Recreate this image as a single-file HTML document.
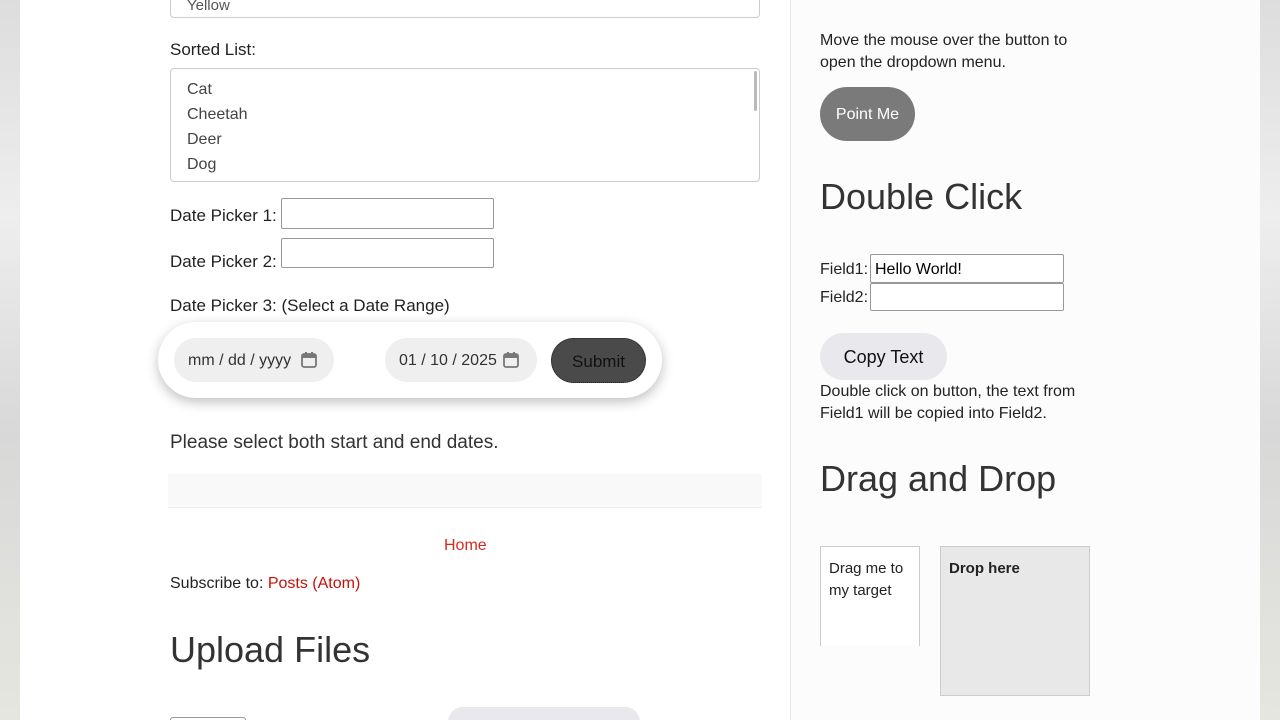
<!DOCTYPE html>
<html style="width:1280px;height:720px;overflow:hidden"><head><meta charset="utf-8"><style>
*{box-sizing:border-box}
body{margin:0;width:1280px;height:720px;overflow:hidden;font-family:"Liberation Sans",sans-serif;color:#222;background:linear-gradient(180deg,#ddd 0%,#eee 30%,#d8d8d8 60%,#e6e6e0 100%);position:relative}
.page{position:absolute;left:20px;top:0;width:1240px;height:720px;background:#fff}
.side{position:absolute;left:790px;top:0;width:470px;height:720px;background:#fcfcfc;border-left:1px solid #e8e8e8}
.a{position:absolute}
.t{font-size:16px;color:#222}
.in{position:absolute;border:1px solid #999;border-radius:2px;background:#fff}
h2{position:absolute;margin:0;font-weight:normal;font-size:36px;color:#333}
.pill{position:absolute;border-radius:22px;background:#efefef;height:44px;font-size:16px;color:#333;line-height:46px;padding-left:14px}
.clip{position:absolute;left:0;top:0;width:1280px;height:720px;overflow:hidden}
</style></head><body><div class="clip">
<div class="page"></div>
<div class="side"></div>
<div class="a" style="left:170px;top:-10px;width:590px;height:28px;border:1px solid #ccc;border-radius:4px;background:#fff"><span style="position:absolute;left:16px;top:6px;color:#555;font-size:15px">Yellow</span></div>
<div class="a t" style="left:170px;top:40px;font-size:17px">Sorted List:</div>
<div class="a" style="left:170px;top:68px;width:590px;height:114px;border:1px solid #ccc;border-radius:4px;background:#fff;font-size:16px;color:#444;line-height:25px;padding:8px 16px">Cat<br>Cheetah<br>Deer<br>Dog
<div style="position:absolute;right:2px;top:2px;width:3px;height:40px;background:#bbb;border-radius:2px"></div></div>
<div class="a t" style="left:170px;top:206px;font-size:17px">Date Picker 1:</div>
<div class="in" style="left:281px;top:198px;width:213px;height:31px"></div>
<div class="a t" style="left:170px;top:252px;font-size:17px">Date Picker 2:</div>
<div class="in" style="left:281px;top:238px;width:213px;height:30px"></div>
<div class="a t" style="left:170px;top:296px;font-size:17px">Date Picker 3: (Select a Date Range)</div>
<div class="a" style="left:158px;top:322px;width:504px;height:76px;border-radius:38px;background:#fff;box-shadow:0 4px 12px rgba(0,0,0,.25)"></div>
<div class="pill" style="left:174px;top:338px;width:160px">mm / dd / yyyy</div>
<div class="pill" style="left:385px;top:338px;width:152px">01 / 10 / 2025</div>
<svg class="a" style="left:300px;top:351px" width="18" height="18" viewBox="0 0 18 18"><rect x="2" y="3" width="14" height="13" rx="2" fill="none" stroke="#777" stroke-width="1.8"/><rect x="2" y="3" width="14" height="4" fill="#777"/><rect x="5" y="1" width="2" height="3" fill="#777"/><rect x="11" y="1" width="2" height="3" fill="#777"/></svg>
<svg class="a" style="left:502px;top:351px" width="18" height="18" viewBox="0 0 18 18"><rect x="2" y="3" width="14" height="13" rx="2" fill="none" stroke="#777" stroke-width="1.8"/><rect x="2" y="3" width="14" height="4" fill="#777"/><rect x="5" y="1" width="2" height="3" fill="#777"/><rect x="11" y="1" width="2" height="3" fill="#777"/></svg>
<div class="a" style="left:551px;top:338px;width:95px;height:45px;border-radius:23px;background:#4a4a4a;border:1px dotted #222;font-size:17px;color:#111;text-align:center;line-height:45px">Submit</div>
<div class="a t" style="left:170px;top:432px;font-size:19px;color:#333">Please select both start and end dates.</div>
<div class="a" style="left:168px;top:474px;width:594px;height:34px;background:#f9f9f9;border-bottom:1px solid #eee"></div>
<div class="a" style="left:444px;top:537px;font-size:16px;color:#d52a1e">Home</div>
<div class="a t" style="left:170px;top:575px">Subscribe to: <span style="color:#c4120a">Posts (Atom)</span></div>
<h2 style="left:170px;top:629px">Upload Files</h2>
<div class="a" style="left:170px;top:717px;width:76px;height:10px;border:1px solid #999;border-radius:3px"></div>
<div class="a" style="left:448px;top:707px;width:192px;height:30px;border-radius:16px;background:#e9e8ed"></div>
<div class="a t" style="left:820px;top:30px;line-height:22px;width:270px">Move the mouse over the button to open the dropdown menu.</div>
<div class="a" style="left:820px;top:87px;width:95px;height:54px;border-radius:27px;background:#7a7a7a;color:#fff;font-size:16px;text-align:center;line-height:56px">Point Me</div>
<h2 style="left:820px;top:176px">Double Click</h2>
<div class="a t" style="left:820px;top:261px">Field1:</div>
<div class="in" style="left:870px;top:254px;width:194px;height:29px;font-size:16px;color:#000;padding:6px 4px">Hello World!</div>
<div class="a t" style="left:820px;top:289px">Field2:</div>
<div class="in" style="left:870px;top:283px;width:194px;height:28px"></div>
<div class="a" style="left:820px;top:333px;width:127px;height:47px;border-radius:24px;background:#e9e8ed;font-size:18px;color:#111;text-align:center;line-height:49px">Copy Text</div>
<div class="a t" style="left:820px;top:381px;line-height:22px;width:280px">Double click on button, the text from Field1 will be copied into Field2.</div>
<h2 style="left:820px;top:458px">Drag and Drop</h2>
<div class="a t" style="left:820px;top:546px;width:100px;height:100px;border:1px solid #ccc;border-bottom:none;background:#fff;padding:11px 8px;line-height:22px;font-size:15px">Drag me to my target</div>
<div class="a t" style="left:940px;top:546px;width:150px;height:150px;border:1px solid #ccc;background:#e8e8e8;padding:11px 8px;font-weight:bold;font-size:15px;line-height:22px">Drop here</div>
</div></body></html>
